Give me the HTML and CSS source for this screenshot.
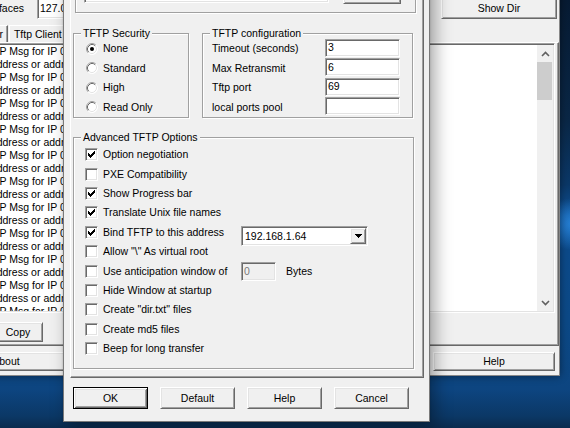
FILE: index.html
```html
<!DOCTYPE html>
<html lang="en">
<head>
<meta charset="utf-8">
<title>Tftpd32 Settings</title>
<link rel="stylesheet" href="styles.css">
</head>
<body>
  <div class="window main">
    <div class="toolbar">
      <div class="if-label"><span>Server interfaces</span></div>
      <div class="edit if-edit">127.0.0.1</div>
      <button class="btn showdir">Show Dir</button>
    </div>
    <div class="tabs">
      <span class="tab">Tftp Server</span>
      <span class="tab">Tftp Client</span>
      <span class="tab">DHCP server</span>
      <span class="tab">Syslog server</span>
      <span class="tab active">Log viewer</span>
    </div>
    <div class="tabpage">
      <div class="listbox edge-sunken">
        <div class="lines">
          <div>Rcvd DHCP Msg for IP 0.0.0.0, Mac 00:50:56:C0:00:08</div>
          <div>No valid address or address pool exhausted</div>
          <div>Rcvd DHCP Msg for IP 0.0.0.0, Mac 00:50:56:C0:00:08</div>
          <div>No valid address or address pool exhausted</div>
          <div>Rcvd DHCP Msg for IP 0.0.0.0, Mac 00:50:56:C0:00:08</div>
          <div>No valid address or address pool exhausted</div>
          <div>Rcvd DHCP Msg for IP 0.0.0.0, Mac 00:50:56:C0:00:08</div>
          <div>No valid address or address pool exhausted</div>
          <div>Rcvd DHCP Msg for IP 0.0.0.0, Mac 00:50:56:C0:00:08</div>
          <div>No valid address or address pool exhausted</div>
          <div>Rcvd DHCP Msg for IP 0.0.0.0, Mac 00:50:56:C0:00:08</div>
          <div>No valid address or address pool exhausted</div>
          <div>Rcvd DHCP Msg for IP 0.0.0.0, Mac 00:50:56:C0:00:08</div>
          <div>No valid address or address pool exhausted</div>
          <div>Rcvd DHCP Msg for IP 0.0.0.0, Mac 00:50:56:C0:00:08</div>
          <div>No valid address or address pool exhausted</div>
          <div>Rcvd DHCP Msg for IP 0.0.0.0, Mac 00:50:56:C0:00:08</div>
          <div>No valid address or address pool exhausted</div>
          <div>Rcvd DHCP Msg for IP 0.0.0.0, Mac 00:50:56:C0:00:08</div>
          <div>No valid address or address pool exhausted</div>
          <div>Rcvd DHCP Msg for IP 0.0.0.0, Mac 00:50:56:C0:00:08</div>
        </div>
        <div class="vscroll">
          <span class="sb-arrow"><svg width="9" height="6" viewBox="0 0 9 6"><path d="M1 5 L4.5 1.5 L8 5" fill="none" stroke="#606060" stroke-width="1.6"/></svg></span>
          <span class="sb-thumb"></span>
          <span class="sb-track"></span>
          <span class="sb-arrow"><svg width="9" height="6" viewBox="0 0 9 6"><path d="M1 1 L4.5 4.5 L8 1" fill="none" stroke="#606060" stroke-width="1.6"/></svg></span>
        </div>
      </div>
      <div class="list-actions">
        <button class="btn clear">Clear</button>
        <button class="btn copy">Copy</button>
      </div>
    </div>
    <div class="main-actions">
      <button class="btn">About</button>
      <button class="btn">Settings</button>
      <button class="btn">Help</button>
    </div>
  </div>

  <div class="window dialog">
    <div class="sheet">
      <fieldset class="group basedir">
        <legend>Base Directory</legend>
        <div class="dir-row">
          <div class="edit dir-edit">C:\Program Files\Tftpd32</div>
          <button class="btn browse">Browse</button>
        </div>
      </fieldset>

      <div class="pair">
        <fieldset class="group security">
          <legend>TFTP Security</legend>
          <div class="opt">
            <svg class="radio" width="12" height="12" viewBox="0 0 12 12"><circle cx="6" cy="6" r="5.5" fill="#fff"/><path d="M2.11 9.89 A5.5 5.5 0 0 1 9.89 2.11" fill="none" stroke="#a0a0a0"/><path d="M9.89 2.11 A5.5 5.5 0 0 1 2.11 9.89" fill="none" stroke="#fff"/><path d="M2.82 9.18 A4.5 4.5 0 0 1 9.18 2.82" fill="none" stroke="#696969"/><path d="M9.18 2.82 A4.5 4.5 0 0 1 2.82 9.18" fill="none" stroke="#e3e3e3"/><circle cx="6" cy="6" r="2" fill="#000"/></svg>
            None
          </div>
          <div class="opt">
            <svg class="radio" width="12" height="12" viewBox="0 0 12 12"><circle cx="6" cy="6" r="5.5" fill="#fff"/><path d="M2.11 9.89 A5.5 5.5 0 0 1 9.89 2.11" fill="none" stroke="#a0a0a0"/><path d="M9.89 2.11 A5.5 5.5 0 0 1 2.11 9.89" fill="none" stroke="#fff"/><path d="M2.82 9.18 A4.5 4.5 0 0 1 9.18 2.82" fill="none" stroke="#696969"/><path d="M9.18 2.82 A4.5 4.5 0 0 1 2.82 9.18" fill="none" stroke="#e3e3e3"/></svg>
            Standard
          </div>
          <div class="opt">
            <svg class="radio" width="12" height="12" viewBox="0 0 12 12"><circle cx="6" cy="6" r="5.5" fill="#fff"/><path d="M2.11 9.89 A5.5 5.5 0 0 1 9.89 2.11" fill="none" stroke="#a0a0a0"/><path d="M9.89 2.11 A5.5 5.5 0 0 1 2.11 9.89" fill="none" stroke="#fff"/><path d="M2.82 9.18 A4.5 4.5 0 0 1 9.18 2.82" fill="none" stroke="#696969"/><path d="M9.18 2.82 A4.5 4.5 0 0 1 2.82 9.18" fill="none" stroke="#e3e3e3"/></svg>
            High
          </div>
          <div class="opt">
            <svg class="radio" width="12" height="12" viewBox="0 0 12 12"><circle cx="6" cy="6" r="5.5" fill="#fff"/><path d="M2.11 9.89 A5.5 5.5 0 0 1 9.89 2.11" fill="none" stroke="#a0a0a0"/><path d="M9.89 2.11 A5.5 5.5 0 0 1 2.11 9.89" fill="none" stroke="#fff"/><path d="M2.82 9.18 A4.5 4.5 0 0 1 9.18 2.82" fill="none" stroke="#696969"/><path d="M9.18 2.82 A4.5 4.5 0 0 1 2.82 9.18" fill="none" stroke="#e3e3e3"/></svg>
            Read Only
          </div>
        </fieldset>

        <fieldset class="group config">
          <legend>TFTP configuration</legend>
          <div class="field"><span>Timeout (seconds)</span><span class="edit num">3</span></div>
          <div class="field"><span>Max Retransmit</span><span class="edit num">6</span></div>
          <div class="field"><span>Tftp port</span><span class="edit num">69</span></div>
          <div class="field"><span>local ports pool</span><span class="edit num"></span></div>
        </fieldset>
      </div>

      <fieldset class="group advanced">
        <legend>Advanced TFTP Options</legend>
        <div class="opt"><span class="check"><svg width="7" height="7" viewBox="0 0 7 7" shape-rendering="crispEdges"><path d="M6 0h1v1H6zM5 1h2v1H5zM0 2h1v1H0zM4 2h3v1H4zM0 3h2v1H0zM3 3h3v1H3zM0 4h5v1H0zM1 5h3v1H1zM2 6h1v1H2z"/></svg></span>Option negotiation</div>
        <div class="opt"><span class="check"></span>PXE Compatibility</div>
        <div class="opt"><span class="check"><svg width="7" height="7" viewBox="0 0 7 7" shape-rendering="crispEdges"><path d="M6 0h1v1H6zM5 1h2v1H5zM0 2h1v1H0zM4 2h3v1H4zM0 3h2v1H0zM3 3h3v1H3zM0 4h5v1H0zM1 5h3v1H1zM2 6h1v1H2z"/></svg></span>Show Progress bar</div>
        <div class="opt"><span class="check"><svg width="7" height="7" viewBox="0 0 7 7" shape-rendering="crispEdges"><path d="M6 0h1v1H6zM5 1h2v1H5zM0 2h1v1H0zM4 2h3v1H4zM0 3h2v1H0zM3 3h3v1H3zM0 4h5v1H0zM1 5h3v1H1zM2 6h1v1H2z"/></svg></span>Translate Unix file names</div>
        <div class="opt">
          <span class="check"><svg width="7" height="7" viewBox="0 0 7 7" shape-rendering="crispEdges"><path d="M6 0h1v1H6zM5 1h2v1H5zM0 2h1v1H0zM4 2h3v1H4zM0 3h2v1H0zM3 3h3v1H3zM0 4h5v1H0zM1 5h3v1H1zM2 6h1v1H2z"/></svg></span>
          <span class="lead">Bind TFTP to this address</span>
          <span class="edit combo">
            <span class="combo-text">192.168.1.64</span>
            <span class="btn drop"><svg width="7" height="4" viewBox="0 0 7 4" shape-rendering="crispEdges"><path d="M0 0h7v1H0zM1 1h5v1H1zM2 2h3v1H2zM3 3h1v1H3z"/></svg></span>
          </span>
        </div>
        <div class="opt"><span class="check"></span>Allow "\" As virtual root</div>
        <div class="opt">
          <span class="check"></span>
          <span class="lead">Use anticipation window of</span>
          <span class="edit win">0</span>
          <span class="unit">Bytes</span>
        </div>
        <div class="opt"><span class="check"></span>Hide Window at startup</div>
        <div class="opt"><span class="check"></span>Create "dir.txt" files</div>
        <div class="opt"><span class="check"></span>Create md5 files</div>
        <div class="opt"><span class="check"></span>Beep for long transfer</div>
      </fieldset>
    </div>

    <div class="actions">
      <button class="btn default">OK</button>
      <button class="btn">Default</button>
      <button class="btn">Help</button>
      <button class="btn">Cancel</button>
    </div>
  </div>
</body>
</html>
```

FILE: styles.css
```css
* { box-sizing: border-box; }

html, body { margin: 0; padding: 0; }

/* desktop wallpaper behind the windows */
body {
  position: relative;
  width: 570px;
  height: 428px;
  overflow: hidden;
  font: 10.5px/13px "Liberation Sans", Arial, sans-serif;
  color: #000;
  background:
    radial-gradient(34px 26px at 574px 224px, rgba(44, 140, 230, 0.85), rgba(44, 140, 230, 0)),
    linear-gradient(180deg, #071b33 0px, #0a2746 120px, #0b3868 185px, #0e5094 215px, #0c4a8a 250px, #0c4987 320px, #0d4580 390px, #0b3866 416px, #0a2b4e 428px);
}

button {
  font: inherit;
  color: inherit;
  margin: 0;
  padding: 0;
}

/* ---------- shared chrome ---------- */
.window {
  position: absolute;
  background: #f0f0f0;
  border: 1px solid #7a7a7a;
}

.btn {
  display: flex;
  align-items: center;
  justify-content: center;
  background: #f0f0f0;
  border: 1px solid;
  border-color: #fff #696969 #696969 #fff;
  box-shadow: inset 1px 1px #e3e3e3, inset -1px -1px #a0a0a0;
  white-space: nowrap;
  flex: none;
}

.btn.default {
  border-color: #000;
  box-shadow: inset 1px 1px #fff, inset -1px -1px #696969, inset 2px 2px #e3e3e3, inset -2px -2px #a0a0a0;
}

.edit,
.edge-sunken {
  background: #fff;
  border: 1px solid;
  border-color: #a0a0a0 #fff #fff #a0a0a0;
  box-shadow: inset 1px 1px #696969, inset -1px -1px #e3e3e3;
}

.edit {
  display: flex;
  align-items: center;
  padding: 0 3px 0 2px;
  white-space: nowrap;
  overflow: hidden;
  flex: none;
}

/* ---------- main window ---------- */
.main {
  left: -57px;
  top: -40px;
  width: 617px;
  height: 416px;
  display: flex;
  flex-direction: column;
  padding: 36px 0 4px;
  border-color: #888;
  box-shadow: 0 0 8px rgba(0, 0, 0, 0.45);
}

.toolbar {
  display: flex;
  align-items: center;
  height: 22px;
  padding-right: 2px;
}

.if-label {
  width: 80px;
  flex: none;
  display: flex;
  justify-content: flex-end;
  white-space: nowrap;
}

.if-edit {
  width: 130px;
  height: 21px;
  margin-left: 13px;
  padding-top: 1px;
}

.showdir {
  width: 116px;
  height: 22px;
  margin-left: auto;
}

.tabs {
  display: flex;
  align-items: flex-end;
  height: 19px;
  margin-top: 4px;
  padding-left: 2px;
}

.tab {
  display: flex;
  align-items: center;
  height: 17px;
  padding: 0 4px;
  margin-right: 1px;
  border: 1px solid;
  border-bottom: 0;
  border-color: #fff #696969 transparent #fff;
  box-shadow: inset -1px 0 #a0a0a0;
  white-space: nowrap;
}

.tab.active { height: 19px; }

.tabpage {
  display: flex;
  flex-direction: column;
  height: 304px;
  padding: 0 3px 3px;
  border: 1px solid;
  border-color: #fff #696969 #696969 #fff;
  box-shadow: inset -1px -1px #a0a0a0;
}

.listbox {
  display: flex;
  height: 270px;
  padding: 1px;
}

.lines {
  flex: 1;
  overflow: hidden;
  white-space: nowrap;
  line-height: 13px;
}

.vscroll {
  width: 16px;
  flex: none;
  display: flex;
  flex-direction: column;
  background: #f0f0f0;
}

.sb-arrow {
  height: 17px;
  flex: none;
  display: flex;
  align-items: center;
  justify-content: center;
}

.sb-thumb {
  height: 38px;
  flex: none;
  margin-right: 1px;
  background: #cdcdcd;
}

.sb-track { flex: 1; }

.list-actions {
  display: flex;
  gap: 5px;
  height: 20px;
  margin-top: 9px;
}

.list-actions .btn { height: 20px; }
.clear { width: 40px; }
.copy { width: 50px; }

.main-actions {
  display: flex;
  justify-content: space-between;
  height: 19px;
  margin-top: 6px;
  padding: 0 4px 0 1px;
}

.main-actions .btn { width: 122px; }

/* ---------- settings dialog ---------- */
.dialog {
  left: 63px;
  top: -40px;
  width: 367px;
  height: 462px;
  padding: 0 5px 0 6px;
  box-shadow: 5px 5px 16px rgba(0, 0, 0, 0.35), 0 0 2px rgba(0, 0, 0, 0.2);
}

.sheet {
  height: 417px;
  padding-top: 4px;
  border: 1px solid;
  border-color: #fff #696969 #696969 #fff;
  box-shadow: inset -1px -1px #a0a0a0;
}

/* etched group boxes */
.group {
  margin: 0;
  padding: 0 8px 0 7px;
  min-width: 0;
  border: 1px solid #a0a0a0;
  box-shadow: 1px 1px #fff, inset 1px 1px #fff;
}

.group legend {
  padding: 0 2px;
  line-height: 11px;
  background: #f0f0f0;
}

.basedir {
  width: 341px;
  height: 47px;
  margin-left: 4px;
  padding-top: 5px;
}

.dir-row {
  display: flex;
  align-items: center;
  gap: 14px;
  height: 22px;
  padding-left: 1px;
}

.dir-edit { width: 245px; height: 20px; }
.browse { width: 58px; height: 22px; }

.pair {
  display: flex;
  margin: 15px 0 0 2px;
}

.security { width: 116px; height: 90px; }

.config {
  width: 211px;
  height: 90px;
  margin-left: 13px;
  padding-right: 12px;
}

.opt {
  display: flex;
  align-items: center;
  gap: 5px;
  white-space: nowrap;
}

.security .opt {
  height: 19.5px;
  padding-left: 5px;
}

.radio { flex: none; display: block; }

.field {
  display: flex;
  align-items: center;
  justify-content: space-between;
  height: 19.5px;
  padding-left: 2px;
  white-space: nowrap;
}

.num {
  width: 75px;
  height: 18px;
  margin-bottom: 2px;
}

.advanced {
  width: 341px;
  height: 237px;
  margin: 14px 0 0 2px;
  padding-top: 2px;
}

.advanced .opt {
  height: 19.4px;
  padding-left: 4px;
}

.check {
  width: 13px;
  height: 13px;
  flex: none;
  padding: 2px;
  background: #fff;
  border: 1px solid;
  border-color: #a0a0a0 #fff #fff #a0a0a0;
  box-shadow: inset 1px 1px #696969, inset -1px -1px #e3e3e3;
}

.check svg { display: block; }

.lead {
  width: 133px;
  flex: none;
}

.combo {
  width: 127px;
  height: 20px;
  margin-top: 8px;
  padding: 1px;
}

.combo-text { padding-left: 2px; }

.drop {
  width: 16px;
  height: 16px;
  margin-left: auto;
}

.drop svg { display: block; }

.win {
  width: 35px;
  height: 19px;
  background: #f0f0f0;
  color: #7a7a7a;
}

.unit { margin-left: 5px; }

.actions {
  display: flex;
  gap: 12px;
  margin-top: 9px;
  padding-left: 3px;
}

.actions .btn {
  width: 75px;
  height: 22px;
}
```
